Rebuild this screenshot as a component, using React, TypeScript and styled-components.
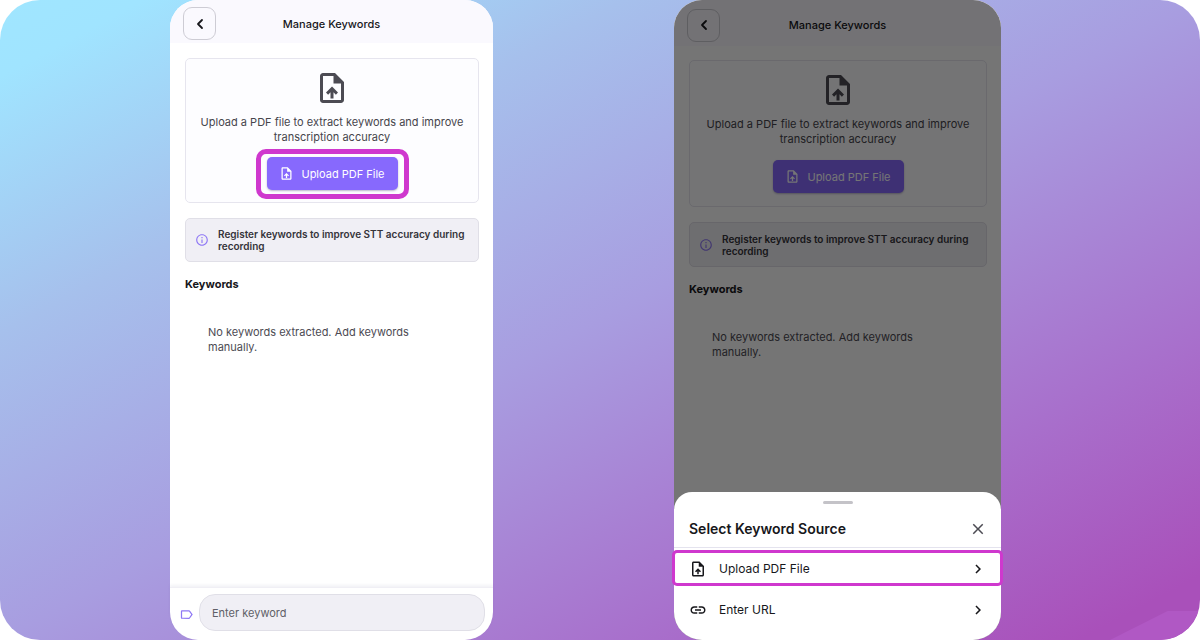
import React from 'react';
import styled, { createGlobalStyle } from 'styled-components';
import {
  MdChevronRight,
  MdClose,
  MdInfoOutline,
  MdLabelOutline,
  MdLink,
  MdUploadFile,
} from 'react-icons/md';

const GlobalStyle = createGlobalStyle`
  *, *::before, *::after { box-sizing: border-box; }
  body {
    margin: 0;
    background: #fff;
    font-family: Inter, "Liberation Sans", sans-serif;
    color: #17171b;
  }
  button, input { font: inherit; color: inherit; }
  h1, h2, p { margin: 0; }
`;

const Stage = styled.main`
  position: relative;
  min-height: 100vh;
  display: grid;
  grid-template-columns: 170fr 323fr 181fr 327fr 199fr;
  border-radius: 40px;
  overflow: hidden;
  background: linear-gradient(to bottom right, #a0e6ff 0%, #a0e4ff 6%, #a6c0ec 26%, #a89de0 50%, #a870cc 76%, #a950ba 95%, #a950ba 100%);

  &::after {
    content: '';
    position: absolute;
    right: 0;
    bottom: 0;
    width: 90px;
    height: 29px;
    background: #b058c4;
    clip-path: polygon(0 100%, 64% 0, 100% 0, 100% 100%);
  }
`;

const Phone = styled.section<{ $column: number }>`
  position: relative;
  z-index: 1;
  grid-column: ${(p) => p.$column};
  display: flex;
  flex-direction: column;
  background: #fff;
  border-radius: 28px;
`;

const Header = styled.header<{ $tall?: boolean }>`
  display: grid;
  grid-template-columns: 33px 1fr 33px;
  align-items: center;
  height: ${(p) => (p.$tall ? 46 : 43)}px;
  padding: 4px 13px 0;
  background: #faf9fe;
  border-radius: 28px 28px 0 0;
`;

const BackButton = styled.button`
  display: grid;
  place-items: center;
  width: 33px;
  height: 33px;
  padding: 0;
  border: 1px solid #cdccd4;
  border-radius: 9px;
  background: transparent;
`;

const Title = styled.h1`
  font-size: 11px;
  line-height: 16px;
  font-weight: 500;
  text-align: center;
`;

const Content = styled.div<{ $tall?: boolean }>`
  flex: 1;
  display: flex;
  flex-direction: column;
  gap: 15px;
  padding: ${(p) => (p.$tall ? 14 : 15)}px 14px 15px 15px;
`;

const UploadCard = styled.div<{ $tall?: boolean }>`
  display: flex;
  flex-direction: column;
  align-items: center;
  padding: ${(p) => (p.$tall ? '11px 12px 13px' : '11px 12px 12px')};
  border: 1px solid #e6e5ee;
  border-radius: 5px;
  background: #fdfdff;
  color: #4c4b53;
`;

const UploadText = styled.p<{ $tall?: boolean }>`
  margin: 9px 0 ${(p) => (p.$tall ? 13 : 12)}px;
  font-size: 11px;
  line-height: 15px;
  text-align: center;
  color: #46454c;
`;

const UploadButton = styled.button<{ $highlight?: boolean }>`
  position: relative;
  display: flex;
  align-items: center;
  justify-content: center;
  gap: 7px;
  width: 131px;
  height: 33px;
  padding: 0;
  border: 0;
  border-radius: 5px;
  background: #8769fd;
  box-shadow: 0 1px 2px rgba(60, 50, 110, 0.35);
  color: #fff;
  font-size: 11px;

  &::after {
    content: '';
    display: ${(p) => (p.$highlight ? 'block' : 'none')};
    position: absolute;
    inset: -8px -11px -9px;
    border: 5px solid #cf38ce;
    border-radius: 10px;
  }
`;

const Notice = styled.div<{ $tall?: boolean }>`
  display: flex;
  align-items: center;
  gap: 9px;
  min-height: ${(p) => (p.$tall ? 45 : 44)}px;
  padding: 9px;
  border: 1px solid #e0dfe7;
  border-radius: 5px;
  background: #f0eff5;
  color: #8f78f5;

  svg { flex: none; }
`;

const NoticeText = styled.p`
  font-size: 10px;
  line-height: 12px;
  font-weight: 600;
  color: #35343a;
`;

const SectionTitle = styled.h2`
  font-size: 11px;
  line-height: 15px;
  font-weight: 700;
`;

const EmptyText = styled.p`
  max-width: 256px;
  padding: 18px 23px;
  font-size: 11px;
  line-height: 15px;
  color: #4c4b53;
`;

const Footer = styled.footer`
  display: flex;
  align-items: center;
  gap: 5px;
  padding: 6px 8px 9px 9px;
  border-top: 1px solid #f0eff5;
  box-shadow: 0 -2px 3px rgba(90, 85, 140, 0.08);
  border-radius: 0 0 28px 28px;
`;

const KeywordLabel = styled.label`
  display: flex;
  padding-top: 4px;
  color: #8f78f5;
`;

const KeywordInput = styled.input`
  flex: 1;
  min-width: 0;
  height: 37px;
  padding: 0 12px;
  border: 1px solid #e0dfe7;
  border-radius: 16px;
  background: #f0eff5;
  font-size: 11px;

  &::placeholder { color: #605f67; opacity: 1; }
`;

const Scrim = styled.div`
  position: absolute;
  inset: 0;
  border-radius: 28px;
  background: rgba(0, 0, 0, 0.54);
`;

const Sheet = styled.div`
  position: absolute;
  inset: auto 0 0;
  display: flex;
  flex-direction: column;
  padding: 9px 0 10px;
  border-radius: 18px 18px 28px 28px;
  background: #fff;
`;

const Handle = styled.div`
  align-self: center;
  width: 30px;
  height: 3px;
  border-radius: 2px;
  background: #c4c3c8;
`;

const SheetHeader = styled.div`
  display: flex;
  align-items: center;
  justify-content: space-between;
  padding: 15px 14px 8px 15px;
  border-bottom: 1px solid #e4e3ee;
`;

const SheetTitle = styled.h2`
  font-size: 14px;
  line-height: 20px;
  font-weight: 600;
`;

const CloseButton = styled.button`
  display: flex;
  padding: 0;
  border: 0;
  background: transparent;
  color: #4c4b53;
`;

const SourceRow = styled.button<{ $highlight?: boolean }>`
  position: relative;
  display: flex;
  align-items: center;
  gap: 12px;
  height: 41px;
  padding: 0 14px 0 15px;
  border: 0;
  background: transparent;
  font-size: 12px;
  text-align: left;

  &::after {
    content: '';
    display: ${(p) => (p.$highlight ? 'block' : 'none')};
    position: absolute;
    inset: 2px -2px 3px;
    border: 3px solid #cf38ce;
    border-radius: 5px;
  }
`;

const SourceName = styled.span`
  flex: 1;
`;

function BackIcon() {
  return (
    <svg width="10" height="12" viewBox="0 0 10 12" fill="none" stroke="currentColor" strokeWidth="1.8" aria-hidden="true">
      <path d="M7 2 3 6l4 4" strokeLinecap="round" strokeLinejoin="round" />
    </svg>
  );
}

function ManageKeywords({ tall, highlight }: { tall?: boolean; highlight?: boolean }) {
  return (
    <>
      <Header $tall={tall}>
        <BackButton aria-label="Back">
          <BackIcon />
        </BackButton>
        <Title>Manage Keywords</Title>
      </Header>
      <Content $tall={tall}>
        <UploadCard $tall={tall}>
          <MdUploadFile size={36} />
          <UploadText $tall={tall}>
            Upload a PDF file to extract keywords and improve transcription accuracy
          </UploadText>
          <UploadButton $highlight={highlight}>
            <MdUploadFile size={15} />
            Upload PDF File
          </UploadButton>
        </UploadCard>
        <Notice $tall={tall}>
          <MdInfoOutline size={14} />
          <NoticeText>Register keywords to improve STT accuracy during recording</NoticeText>
        </Notice>
        <SectionTitle>Keywords</SectionTitle>
        <EmptyText>No keywords extracted. Add keywords manually.</EmptyText>
      </Content>
    </>
  );
}

export default function App() {
  return (
    <>
      <GlobalStyle />
      <Stage>
        <Phone $column={2}>
          <ManageKeywords highlight />
          <Footer>
            <KeywordLabel htmlFor="keyword" aria-label="Keyword">
              <MdLabelOutline size={15} />
            </KeywordLabel>
            <KeywordInput id="keyword" type="text" placeholder="Enter keyword" />
          </Footer>
        </Phone>
        <Phone $column={4}>
          <ManageKeywords tall />
          <Scrim />
          <Sheet role="dialog" aria-labelledby="sheet-title">
            <Handle />
            <SheetHeader>
              <SheetTitle id="sheet-title">Select Keyword Source</SheetTitle>
              <CloseButton aria-label="Close">
                <MdClose size={18} />
              </CloseButton>
            </SheetHeader>
            <SourceRow $highlight>
              <MdUploadFile size={18} />
              <SourceName>Upload PDF File</SourceName>
              <MdChevronRight size={18} />
            </SourceRow>
            <SourceRow>
              <MdLink size={18} />
              <SourceName>Enter URL</SourceName>
              <MdChevronRight size={18} />
            </SourceRow>
          </Sheet>
        </Phone>
      </Stage>
    </>
  );
}
